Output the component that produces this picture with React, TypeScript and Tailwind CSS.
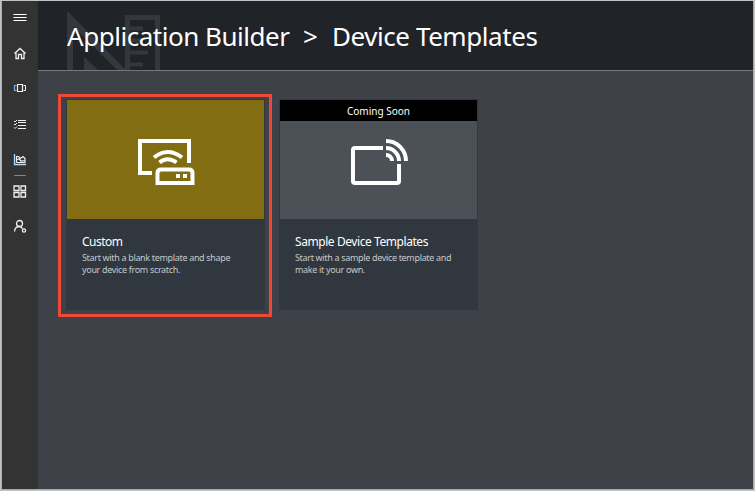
import type { ReactNode } from 'react';

function Watermark() {
  return (
    <svg className="absolute left-[29px] top-0 h-[69px] w-[94px]" viewBox="67 1 94 69" fill="none" stroke="#34383c" strokeWidth="5">
      <path fill="#34383c" stroke="none" fillRule="evenodd" d="M67 11 L126 70 H117 L73 26 V70 H67 Z M84 57 L98 70 H84 Z" />
      <path d="M127.500 71V17.500H157.500V71" />
      <path d="M130 28.500H143M130 40.500H143M130 52.500H148M130 64.500H143" strokeWidth="4" />
    </svg>
  );
}

function NavIcon({ children, className = '' }: { children: ReactNode; className?: string }) {
  return (
    <button className={`flex h-4 w-4 shrink-0 items-center justify-center ${className}`}>
      <svg width="16" height="16" viewBox="0 0 16 16" fill="none" stroke="#f0f0f0" strokeWidth="1">
        {children}
      </svg>
    </button>
  );
}

function Sidebar() {
  return (
    <nav className="flex w-9 shrink-0 flex-col items-center bg-[#333333] pt-2">
      <NavIcon>
        <path d="M1.500 5.500H14.500M1.500 8.500H14.500M1.500 11.500H14.500" stroke="#fff" />
      </NavIcon>
      <NavIcon className="mt-5">
        <path d="M2.500 8.500L8 3.500L13.500 8.500M4 7.500V13.500H6.500V9.500H9.500V13.500H12V7.500" strokeWidth="1.300" />
      </NavIcon>
      <NavIcon className="mt-[19px]">
        <path d="M5.500 4.500H10.500V11.500H5.500Z" strokeWidth="1.200" />
        <path d="M4.500 5.500H2.500V10.500H4.500" stroke="#75aef0" strokeWidth="1.200" />
        <path d="M11.500 5.500H13.500V10.500H11.500" />
      </NavIcon>
      <NavIcon className="mt-5">
        <path d="M6 4.500H14M6 6.500H14M6 9.500H14M6 12.500H14M2 5L3 6L5 4M2 8L3 9L5 7M2 11.500L3 12.500L5 10.500" />
      </NavIcon>
      <NavIcon className="mt-[19px]">
        <path d="M2.500 3V13.500H14" stroke="#b8daf5" strokeWidth="1.300" />
        <path d="M4.500 11.500V5.500H6.500L8.500 7.500L11 5.500L13 7.500V11.500H4.500M5 8.500L7 8L9 10L13 9.500" strokeWidth="1.200" />
      </NavIcon>
      <div className="mt-2 h-px w-3 shrink-0 bg-[#858585]" />
      <NavIcon className="mt-2">
        <path d="M2 2H7V6.500H2ZM9 2H13.500V6.500H9ZM2 8.500H7V13H2ZM9 8.500H13.500V13H9Z" strokeWidth="1.300" />
      </NavIcon>
      <NavIcon className="mt-[18px]">
        <circle cx="7.500" cy="5.500" r="3" strokeWidth="1.300" />
        <path d="M2.500 13.500C2.800 10.500 4.700 8.500 7.300 8.500C8.500 8.500 9.500 9.300 10.500 10.500" strokeWidth="1.300" />
        <circle cx="12" cy="12.500" r="1.600" strokeWidth="1.300" />
      </NavIcon>
    </nav>
  );
}

function Header() {
  return (
    <header className="relative h-[70px] shrink-0 overflow-hidden border-b border-[#747878] bg-[#202428]">
      <Watermark />
      <h1 className="relative flex whitespace-nowrap pl-[29px] pt-[17px] text-[26px] leading-9 text-white">
        <span className="w-[236px] tracking-[-0.47px]">Application Builder</span>
        <span className="w-[29px]">&gt;</span>
        <span className="tracking-[-0.43px]">Device Templates</span>
      </h1>
    </header>
  );
}

function DeviceIcon() {
  return (
    <svg width="60" height="50" viewBox="136 136 60 50" fill="none" stroke="#fff" strokeWidth="4">
      <path d="M152 173H140V141H189V163" />
      <path d="M154 157.500Q167.500 146.500 182 157.500M159.500 162.500Q167.500 156 176.500 162.500" />
      <path d="M157.500 183V173Q157.500 169.500 161 169.500H189Q192.500 169.500 192.500 173V183Z" />
      <path d="M176 176H180M183 176H187" />
    </svg>
  );
}

function CastIcon() {
  return (
    <svg width="60" height="50" viewBox="350 137 60 50" fill="none" stroke="#fff" strokeWidth="4">
      <path d="M383 148H355Q353 148 353 150V181Q353 183 355 183H397Q399 183 399 181V164" />
      <path d="M386 155A6 6 0 0 1 392 161M386 148A13 13 0 0 1 399 161M386 141A20 20 0 0 1 406 161" />
    </svg>
  );
}

interface CardProps {
  title: string;
  lines: [string, string];
  cover: ReactNode;
  titleClass: string;
}

function TemplateCard({ title, lines, cover, titleClass }: CardProps) {
  return (
    <article className="h-[211px] w-[199px] border border-[#353739] bg-[#31373e]">
      {cover}
      <div className="whitespace-nowrap pl-[15px] pt-[14px]">
        <h2 className={`text-[12px] leading-[18px] text-white ${titleClass}`}>{title}</h2>
        <p className="pt-px text-[9px] leading-3 tracking-[-0.33px] text-[#c6c8ca]">
          {lines[0]}
          <br />
          {lines[1]}
        </p>
      </div>
    </article>
  );
}

export default function App() {
  return (
    <div className="h-[491px] w-[755px] border border-[#c1c4c6] font-['Noto_Sans','Open_Sans',sans-serif]">
      <div className="flex h-[489px] border-x border-b border-[#80b3e3]">
        <Sidebar />
        <div className="flex min-w-0 flex-1 flex-col bg-[#3f4148]">
          <Header />
          <main className="flex items-start pl-5 pt-[23px]">
            <div className="h-[223px] w-[214px] shrink-0 border-[3px] border-[#f04837] pl-[5px] pt-[2px]">
              <TemplateCard
                title="Custom"
                titleClass="tracking-[-0.5px]"
                lines={['Start with a blank template and shape', 'your device from scratch.']}
                cover={
                  <div className="h-[119px] bg-[#826d12] pl-[69px] pt-9">
                    <DeviceIcon />
                  </div>
                }
              />
            </div>
            <div className="ml-[7px] mt-[5px]">
              <TemplateCard
                title="Sample Device Templates"
                titleClass="tracking-[-0.43px]"
                lines={['Start with a sample device template and', 'make it your own.']}
                cover={
                  <div className="h-[119px] bg-[#4c5158]">
                    <div className="h-[21px] bg-black pt-1 text-center text-[10px] leading-[15px] text-white">Coming Soon</div>
                    <div className="pl-[70px] pt-4">
                      <CastIcon />
                    </div>
                  </div>
                }
              />
            </div>
          </main>
        </div>
      </div>
    </div>
  );
}
